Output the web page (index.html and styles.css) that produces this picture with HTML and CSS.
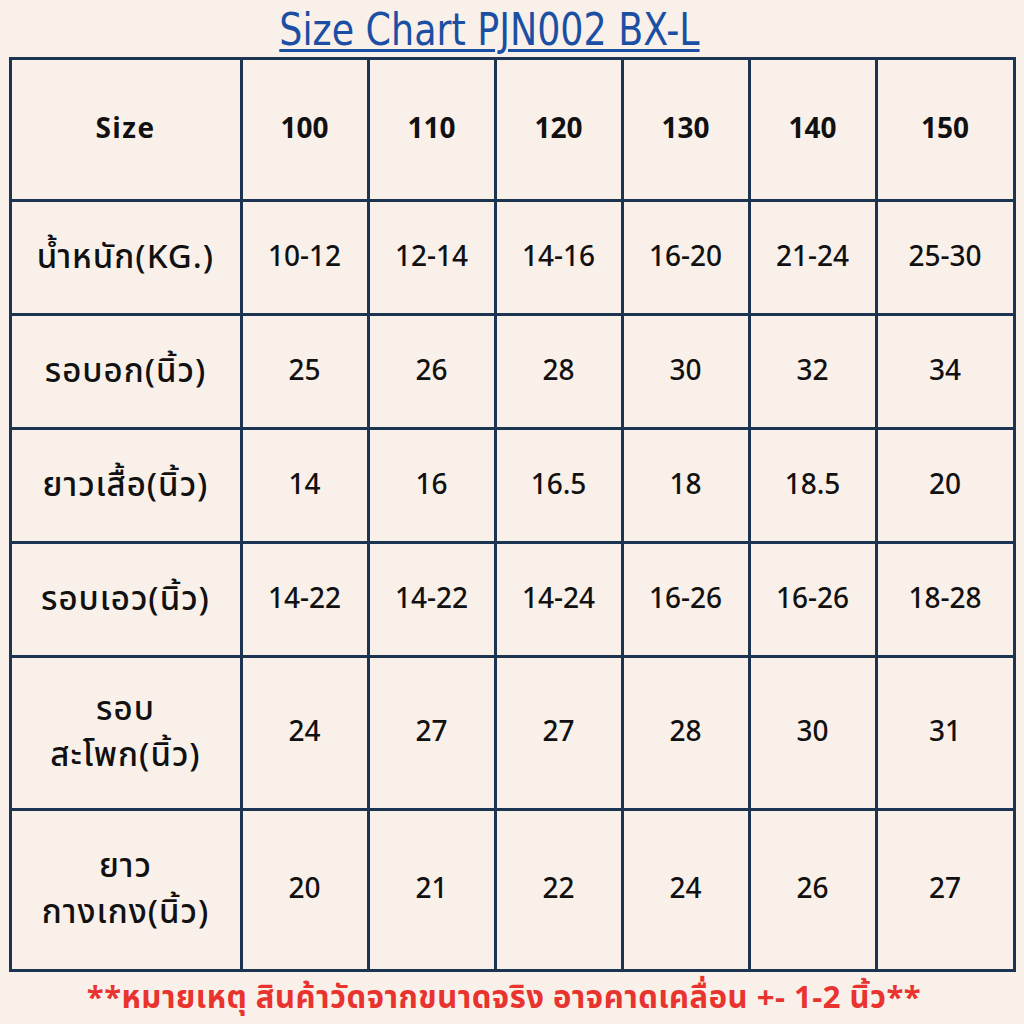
FILE: index.html
```html
<!DOCTYPE html>
<html lang="th">
<head>
<meta charset="utf-8">
<link rel="stylesheet" href="styles.css">
</head>
<body>
<div class="page">
  <h1 class="title">Size Chart PJN002 BX-L</h1>
  <table class="chart">
    <colgroup>
      <col class="c0"><col class="c1"><col class="c1"><col class="c1"><col class="c1"><col class="c1"><col class="c6">
    </colgroup>
    <tr class="r0"><th>Size</th><th>100</th><th>110</th><th>120</th><th>130</th><th>140</th><th>150</th></tr>
    <tr class="r1"><td class="lab">น้ำหนัก(KG.)</td><td>10-12</td><td>12-14</td><td>14-16</td><td>16-20</td><td>21-24</td><td>25-30</td></tr>
    <tr class="r1"><td class="lab">รอบอก(นิ้ว)</td><td>25</td><td>26</td><td>28</td><td>30</td><td>32</td><td>34</td></tr>
    <tr class="r1"><td class="lab">ยาวเสื้อ(นิ้ว)</td><td>14</td><td>16</td><td>16.5</td><td>18</td><td>18.5</td><td>20</td></tr>
    <tr class="r1"><td class="lab">รอบเอว(นิ้ว)</td><td>14-22</td><td>14-22</td><td>14-24</td><td>16-26</td><td>16-26</td><td>18-28</td></tr>
    <tr class="r5"><td class="lab">รอบ<br>สะโพก(นิ้ว)</td><td>24</td><td>27</td><td>27</td><td>28</td><td>30</td><td>31</td></tr>
    <tr class="r6"><td class="lab">ยาว<br>กางเกง(นิ้ว)</td><td>20</td><td>21</td><td>22</td><td>24</td><td>26</td><td>27</td></tr>
  </table>
  <p class="note">**หมายเหตุ สินค้าวัดจากขนาดจริง อาจคาดเคลื่อน +- 1-2 นิ้ว**</p>
</div>
</body>
</html>
```
FILE: styles.css
```css
html, body {
  margin: 0;
  padding: 0;
  background: #f9f0ea;
}
.page {
  width: 1024px;
  height: 1024px;
  display: flex;
  flex-direction: column;
  align-items: center;
  font-family: "Noto Sans Thai", "Noto Sans", "DejaVu Sans", sans-serif;
}
.title {
  margin: 5px 0 0 0;
  height: 52px;
  font-family: "DejaVu Sans Condensed", "DejaVu Sans", sans-serif;
  font-weight: normal;
  font-size: 44px;
  line-height: 50px;
  color: #1b4fa3;
  text-decoration: underline;
  text-decoration-thickness: 3px;
  text-underline-offset: 4px;
  white-space: nowrap;
  transform: translateX(-23px) scaleX(0.92);
}
.chart {
  border-collapse: collapse;
  table-layout: fixed;
  width: 1004px;
  border: 3px solid #1c3352;
}
.chart th, .chart td {
  border: 3px solid #1c3352;
  text-align: center;
  vertical-align: middle;
  padding: 0;
  color: #111;
  font-size: 28px;
  font-weight: 500;
  line-height: 44px;
}
.chart th {
  font-weight: 700;
}
.chart th:first-child {
  letter-spacing: 1.5px;
}
.chart .lab {
  font-size: 33px;
  letter-spacing: 1px;
  line-height: 46px;
}
.c0 { width: 231px; }
.c1 { width: 127px; }
.c6 { width: 138px; }
.r0 { height: 142px; }
.r1 { height: 114px; }
.r5 { height: 153px; }
.r6 { height: 161px; }
.note {
  margin: 0;
  flex: 1;
  display: flex;
  align-items: center;
  font-size: 31px;
  font-weight: 700;
  letter-spacing: 0.5px;
  color: #e8332f;
  white-space: nowrap;
  transform: translateX(-8px);
}
```
